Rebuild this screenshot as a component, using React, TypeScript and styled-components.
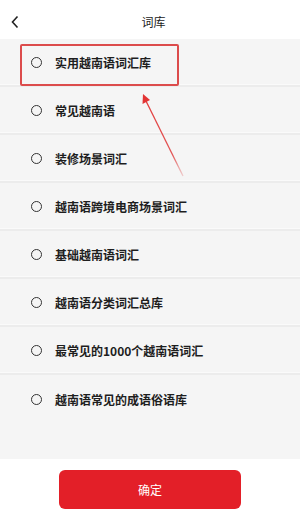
import React, { useState } from 'react';
import styled, { createGlobalStyle } from 'styled-components';

const GlobalStyle = createGlobalStyle`
  html, body { margin: 0; padding: 0; background: #fff; }
  body {
    font-family: "Noto Sans CJK SC", "Noto Sans", sans-serif;
    -webkit-font-smoothing: antialiased;
  }
`;

const Page = styled.div`
  position: relative;
  width: 300px;
  height: 518px;
  display: flex;
  flex-direction: column;
  background: #fff;
  overflow: hidden;
`;

const Header = styled.div`
  height: 39px;
  display: flex;
  align-items: center;
  justify-content: center;
  position: relative;
  flex-shrink: 0;
`;

const BackButton = styled.button`
  position: absolute;
  left: 7px;
  top: 13px;
  width: 16px;
  height: 18px;
  padding: 0;
  border: none;
  background: none;
  display: flex;
  align-items: center;
  justify-content: center;
`;

const Title = styled.div`
  font-size: 12px;
  color: #222;
  margin-left: 7px;
  margin-top: 3px;
`;

const List = styled.div`
  background: #f5f5f5;
  height: 420px;
  display: flex;
  flex-direction: column;
  flex-shrink: 0;
`;

const Row = styled.div<{ $last?: boolean }>`
  position: relative;
  height: 48px;
  box-sizing: border-box;
  display: flex;
  align-items: center;
  padding-left: 31px;
  padding-top: 1px;
  gap: 13px;
  border-bottom: ${p => (p.$last ? 'none' : '2px solid #ececec')};
  box-shadow: ${p => (p.$last ? 'none' : 'inset 0 -3px 0 -2px #fafafa')};
  cursor: pointer;
`;

const Radio = styled.span<{ $on: boolean }>`
  width: 9px;
  height: 9px;
  border: 1.7px solid #333;
  border-radius: 50%;
  flex-shrink: 0;
  background: ${p => (p.$on ? 'radial-gradient(circle, #e5202a 45%, transparent 50%)' : 'transparent')};
`;

const Label = styled.span`
  font-size: 12px;
  font-weight: 700;
  color: #1e1e1e;
`;

const Highlight = styled.div`
  position: absolute;
  left: 20px;
  top: 5px;
  width: 159px;
  height: 42px;
  box-sizing: border-box;
  border: 2px solid #dc4c4c;
  border-radius: 2px;
  pointer-events: none;
`;

const Arrow = styled.svg`
  position: absolute;
  left: 0;
  top: 0;
  pointer-events: none;
`;

const Footer = styled.div`
  flex: 1;
  display: flex;
  justify-content: center;
  padding-top: 11px;
`;

const Confirm = styled.button`
  width: 182px;
  height: 39px;
  border: none;
  border-radius: 6px;
  background: #e31f28;
  color: #fff;
  font-family: "Noto Sans CJK SC", sans-serif;
  font-size: 12px;
`;

const items = [
  '实用越南语词汇库',
  '常见越南语',
  '装修场景词汇',
  '越南语跨境电商场景词汇',
  '基础越南语词汇',
  '越南语分类词汇总库',
  '最常见的1000个越南语词汇',
  '越南语常见的成语俗语库',
];

export default function App() {
  const [selected, setSelected] = useState<number | null>(null);

  return (
    <>
      <GlobalStyle />
      <Page>
        <Header>
          <BackButton>
            <svg width="10" height="14" viewBox="0 0 10 14">
              <path d="M7.5 1.5 L2.5 7 L7.5 12.5" fill="none" stroke="#222" strokeWidth="1.6" />
            </svg>
          </BackButton>
          <Title>词库</Title>
        </Header>
        <List>
          {items.map((t, i) => (
            <Row key={t} $last={i === items.length - 1} onClick={() => setSelected(i)}>
              <Radio $on={selected === i} />
              <Label>{t}</Label>
              {i === 0 && <Highlight />}
            </Row>
          ))}
        </List>
        <Footer>
          <Confirm>确定</Confirm>
        </Footer>
        <Arrow width="300" height="518" viewBox="0 0 300 518">
          <defs>
            <linearGradient id="ar" x1="143" y1="95" x2="183" y2="176" gradientUnits="userSpaceOnUse">
              <stop offset="0" stopColor="#e23a3a" />
              <stop offset="0.75" stopColor="#e25555" />
              <stop offset="1" stopColor="#e8a0a0" stopOpacity="0.5" />
            </linearGradient>
          </defs>
          <line x1="146" y1="101" x2="183" y2="176" stroke="url(#ar)" strokeWidth="1.3" />
          <polygon points="143,94 142.5,104 150,100" fill="#e23434" />
        </Arrow>
      </Page>
    </>
  );
}
